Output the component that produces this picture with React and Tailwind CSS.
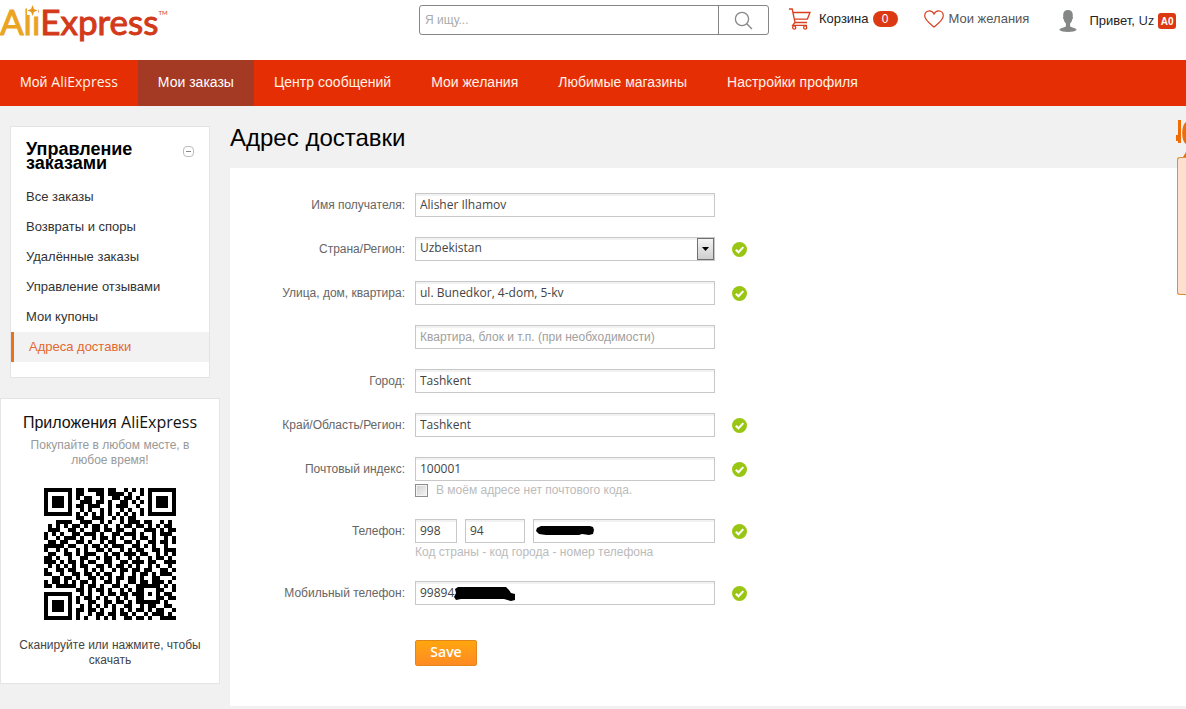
const NAV = ['Мои заказы', 'Центр сообщений', 'Мои желания', 'Любимые магазины', 'Настройки профиля'];

const MENU = ['Все заказы', 'Возвраты и споры', 'Удалённые заказы', 'Управление отзывами', 'Мои купоны', 'Адреса доставки'];

const QR_ROWS = [
  '#######.##.####.##..#.#.#.#######',
  '#.....#.##...##.####.#..#.#.....#',
  '#.###.#.#.##..#..##.##.#..#.###.#',
  '#.###.#..###.##.#..##.#.#.#.###.#',
  '#.###.#.##.###..#.###..#..#.###.#',
  '#.....#..#.#..#.#..#.#..#.#.....#',
  '#######.#.#.#.#.#.#.#.#.#.#######',
  '........##..###..#.#.##..........',
  '...####..###..#.#..#.###.##..#.#.',
  '.#.#.#.##.#.##.#..#.##.##.#.#.##.',
  '.###..##.#..##.##.##..#..###.#.##',
  '#.#.#..##.###.#..##.###.#..#.###.',
  '#..#.###.#..#.##.#.#..#.##.#..#.#',
  '.##.##..##.#..#.##..##.#..##.##.#',
  '#####.##..#.##.#.###..##.#.#..#..',
  '#..#.#..#.#..##.#..#.#.##..##.###',
  '.##..##.#.###..#.##.###.##..#.#.#',
  '##.#..#..##..#.##.#..#.#..#.##.#.',
  '###.#.##.#.##..##..##.###.##..###',
  '.#.#.#.#.##..##.#.##.#.#..#.#..#.',
  '#..##.##..#.#.#..#.##.##.##..##.#',
  '##..#..##.##.#.##..#..#.##.#.###.',
  '..##.##.#..##.#.#.##.##.#..##...#',
  '#.##.#.#.##.#..##.#..##.##.###.#.',
  '##.#####.#.##.#..##.#..######.#.#',
  '........##.#.##.#..#.#.##...##..#',
  '#######..#.#..#.##.##.###.#.#.##.',
  '#.....#.#.##.#.#..#.#..##...##.##',
  '#.###.#.#..##..##.##.#.######.#..',
  '#.###.#..#.#.#.#.#..##..#.##..##.',
  '#.###.#.##.##.#..#.#.#.##.#.##..#',
  '#.....#.#..#.##.##.##.#..#.###.#.',
  '#######.#.#..#.#.#..##.##.#..####',
];

function CheckIcon() {
  return (
    <svg className="size-[15px] shrink-0" viewBox="0 0 15 15" aria-hidden="true">
      <circle cx="7.5" cy="7.5" r="7.5" fill="#99c613" />
      <path d="M3.8 7.700 6.500 10.300 11.300 5.100" fill="none" stroke="#fff" strokeWidth="2.1" />
    </svg>
  );
}

function QrCode() {
  return (
    <svg className="mx-auto size-[132px]" viewBox="0 0 33 33" shapeRendering="crispEdges" role="img" aria-label="QR">
      {QR_ROWS.map((row, y) =>
        [...row].map((cell, x) => cell === '#' && <rect key={`${x}-${y}`} x={x} y={y} width="1" height="1" />)
      )}
    </svg>
  );
}

const inputClass =
  "block h-6 w-full min-w-0 border border-[#c8c8c8] bg-white px-1 pb-0.5 font-['Open_Sans',sans-serif] text-[12px] text-[#444] shadow-[inset_0_2px_1px_#f1f1f1] outline-none placeholder:font-['Liberation_Sans',sans-serif] placeholder:text-[#a0a0a0]";

function Field({ id, label, ok, hint, children }) {
  return (
    <div className="mb-5 grid grid-cols-[175px_300px_22px] gap-x-[10px]">
      <label htmlFor={id} className="text-right text-[12px] leading-6 text-[#666]">
        {label}
      </label>
      <div>
        {children}
        {hint}
      </div>
      <div className="flex h-6 items-center pl-[7px]">{ok && <CheckIcon />}</div>
    </div>
  );
}

function Header() {
  return (
    <header className="flex h-[60px] items-start bg-white">
      <a href="#" aria-label="AliExpress" className="relative flex w-[419px] shrink-0 items-start font-['Lato',sans-serif] text-[35px] leading-[42px] text-[#d23a1a] [-webkit-text-stroke:1px]">
        <span className="text-[#eba422]">Ali</span>Express
        <span className="pt-2 text-[6px] leading-[10px] [-webkit-text-stroke:0]">TM</span>
        <svg className="absolute left-[27px] top-[4px] h-[13px] w-[11px]" viewBox="0 0 11 13" aria-hidden="true">
          <path d="M0 0h11v11H0z" fill="#fff" />
          <path d="M5.500 1 6.900 5.100 10.500 6.500 6.900 7.900 5.500 12 4.100 7.900.5 6.500 4.100 5.100z" fill="#e8951c" />
        </svg>
      </a>
      <form className="mt-[5px] flex h-[30px] w-[350px] shrink-0 rounded-[3px] border border-[#858585]">
        <input aria-label="Поиск" placeholder="Я ищу..." className="min-w-0 flex-1 px-[5px] text-[12px] outline-none placeholder:text-[#aaa]" />
        <button type="button" aria-label="Найти" className="flex w-[50px] items-center justify-center border-l border-[#858585]">
          <svg className="size-[19px]" viewBox="0 0 19 19" fill="none" stroke="#888" strokeWidth="1.3">
            <circle cx="8" cy="8" r="6.6" />
            <path d="m12.700 12.700 5.300 5.300" />
          </svg>
        </button>
      </form>
      <div className="ml-5 flex h-[38px] items-center whitespace-nowrap text-[13px] text-[#222]">
        <a href="#" className="flex items-center">
          <svg className="mr-2 h-[22px] w-[22px]" viewBox="0 0 22 22" fill="none" stroke="#d8401f" strokeWidth="1.3">
            <path d="M0 1h3.200L6 14.500h12M3.800 4.500H21l-2.600 6.600H5.200M6 14.500l-2.300 2.800H18" />
            <circle cx="5.2" cy="19.5" r="1.6" />
            <circle cx="16.2" cy="19.5" r="1.6" />
          </svg>
          Корзина
          <span className="ml-1 flex h-4 w-[25px] items-center justify-center rounded-full bg-[#dc3912] text-[12px] text-white">0</span>
        </a>
        <a href="#" className="ml-[26px] flex items-center text-[#555]">
          <svg className="mr-[5px] h-[18px] w-5" viewBox="0 0 20 18" fill="none" stroke="#d8401f" strokeWidth="1.2">
            <path d="M10 17C6.500 14 .7 10.200.7 5.800.7 2.800 2.800.8 5.400.8 7.600.8 9.200 2.200 10 4c.8-1.800 2.400-3.200 4.600-3.200 2.600 0 4.700 2 4.700 5C19.300 10.200 13.500 14 10 17z" />
          </svg>
          Мои желания
        </a>
        <a href="#" className="ml-[30px] flex items-center pt-1">
          <svg className="mr-3 h-[22px] w-[18px]" viewBox="0 0 18 22" fill="#858786">
            <path d="M9 0c3 0 4.800 1.800 4.800 4.800 0 .8 0 1.400-.2 1.900.7.200.5 1.700-.3 2.500-.3 2-1.300 3.400-2.200 4.200v2.800c1 1.200 5.800 1.600 6.600 3.600C16.500 21.500 13 22 9 22S1.500 21.500.3 19.800c.8-2 5.600-2.400 6.600-3.600v-2.800C6 12.600 5 11.200 4.700 9.200 3.900 8.400 3.700 6.900 4.400 6.700c-.2-.5-.2-1.100-.2-1.900C4.200 1.800 6 0 9 0z" />
          </svg>
          <span className="leading-[18px]">
            Привет, <span className="font-['Open_Sans',sans-serif] leading-none">Uz</span>
          </span>
          <span className="ml-1 flex h-4 w-[18px] items-center justify-center rounded-[3px] bg-[#dc3912] text-[10px] font-bold text-white">A0</span>
        </a>
      </div>
    </header>
  );
}

function Sidebar() {
  return (
    <aside className="w-[220px] shrink-0">
      <nav className="mx-[10px] mt-5 border border-[#e4e4e6] bg-white pb-[15px]">
        <div className="flex items-start justify-between px-[15px] pb-3 pt-[15px]">
          <h2 className="text-[18px] font-bold leading-[14px] text-black">
            Управление
            <br />
            заказами
          </h2>
          <button type="button" aria-label="Свернуть" className="mt-1 flex size-[11px] items-center justify-center rounded-[4px] border border-[#bbb]">
            <span className="h-px w-[5px] bg-[#888]" />
          </button>
        </div>
        <ul>
          {MENU.map((item, i) => (
            <li key={item}>
              <a
                href="#"
                className={
                  i === MENU.length - 1
                    ? 'block border-l-3 border-[#e6741a] bg-[#f2f2f3] pl-[15px] text-[13px] leading-[30px] text-[#e2682f]'
                    : 'block pl-[15px] text-[13px] leading-[30px] text-[#333]'
                }
              >
                {item}
              </a>
            </li>
          ))}
        </ul>
      </nav>
      <section className="mt-5 border border-[#e4e4e6] bg-white px-3 pb-[15px] pt-[13px] text-center">
        <h3 className="text-[16px] leading-[22px] text-[#111]">
          Приложения <span className="font-['Open_Sans',sans-serif] leading-none">AliExpress</span>
        </h3>
        <p className="mb-5 mt-1 px-2 text-[12px] leading-[15px] text-[#999]">Покупайте в любом месте, в любое время!</p>
        <QrCode />
        <p className="mt-[18px] text-[12px] leading-[15px] text-[#444]">Сканируйте или нажмите, чтобы скачать</p>
      </section>
    </aside>
  );
}

function AddressForm() {
  return (
    <form className="bg-white pb-10 pt-[25px]">
      <Field id="name" label="Имя получателя:">
        <input id="name" className={inputClass} defaultValue="Alisher Ilhamov" />
      </Field>
      <Field id="country" label="Страна/Регион:" ok>
        <div className="relative">
          <select id="country" className={`${inputClass} appearance-none`}>
            <option>Uzbekistan</option>
          </select>
          <span className="pointer-events-none absolute right-px top-px flex h-[22px] w-[17px] items-center justify-center border border-[#707070] bg-linear-to-b from-[#f4f4f4] to-[#cfcfcf]">
            <svg className="h-1 w-[7px]" viewBox="0 0 7 4">
              <path d="M0 0h7L3.500 4z" />
            </svg>
          </span>
        </div>
      </Field>
      <Field id="street" label="Улица, дом, квартира:" ok>
        <input id="street" className={inputClass} defaultValue="ul. Bunedkor, 4-dom, 5-kv" />
      </Field>
      <Field id="flat" label="">
        <input id="flat" aria-label="Квартира, блок" className={inputClass} placeholder="Квартира, блок и т.п. (при необходимости)" />
      </Field>
      <Field id="city" label="Город:">
        <input id="city" className={inputClass} defaultValue="Tashkent" />
      </Field>
      <Field id="region" label="Край/Область/Регион:" ok>
        <input id="region" className={inputClass} defaultValue="Tashkent" />
      </Field>
      <Field
        id="zip"
        label="Почтовый индекс:"
        ok
        hint={
          <label className="flex h-[18px] items-center text-[12px] text-[#bbb]">
            <input type="checkbox" className="mr-2 size-[13px] appearance-none border border-[#8e8e8e] bg-linear-to-br from-[#cfcfcf] to-[#f6f6f6] shadow-[inset_0_0_0_1px_#f4f4f4]" />
            В моём адресе нет почтового кода.
          </label>
        }
      >
        <input id="zip" className={inputClass} defaultValue="100001" />
      </Field>
      <Field id="phone" label="Телефон:" ok hint={<p className="text-[12px] leading-[18px] text-[#bbb]">Код страны - код города - номер телефона</p>}>
        <div className="grid grid-cols-[42px_60px_1fr] gap-x-2">
          <input id="phone" className={inputClass} defaultValue="998" />
          <input aria-label="Код города" className={inputClass} defaultValue="94" />
          <div className="relative">
            <input aria-label="Номер телефона" className={inputClass} />
            <svg className="pointer-events-none absolute left-[3px] top-1.5 h-3 w-[60px]" viewBox="0 0 60 12">
              <path d="M5 1h49l3 1 1 3-1 4-4 1-7-1-3 1H10L3 9 0 6l1-3z" />
            </svg>
          </div>
        </div>
      </Field>
      <Field id="mobile" label="Мобильный телефон:" ok>
        <div className="relative">
          <input id="mobile" className={inputClass} defaultValue="99894" />
          <svg className="pointer-events-none absolute left-[39px] top-[5px] h-[15px] w-[62px]" viewBox="0 0 62 15">
            <path d="M4 1h48l3 3 2 3 4 1v6l-4 1-7-2H7l-5 1-2-3 2-4-1-4z" />
          </svg>
        </div>
      </Field>
      <button
        type="button"
        className="ml-[185px] mt-[35px] block h-[26px] w-[62px] rounded-[2px] border border-[#e2861c] bg-linear-to-b from-[#ffa60c] to-[#ff8a22] pb-0.5 font-['Open_Sans',sans-serif] text-[14px] font-semibold leading-[22px] text-white"
      >
        Save
      </button>
    </form>
  );
}

export default function App() {
  return (
    <div className="min-h-screen bg-[#f1f1f2] font-['Liberation_Sans',Arial,sans-serif]">
      <Header />
      <nav className="flex h-[46px] bg-[#e62e04] text-[14px] leading-[45px] text-[#fff3e6]">
        <a href="#" className="px-5">
          Мой <span className="font-['Open_Sans',sans-serif] leading-none">AliExpress</span>
        </a>
        {NAV.map((item, i) => (
          <a key={item} href="#" className={i === 0 ? 'bg-[#a43a24] px-5 text-white' : 'px-5'}>
            {item}
          </a>
        ))}
      </nav>
      <div className="relative flex gap-[10px] overflow-hidden pb-[3px]">
        <Sidebar />
        <main className="min-w-0 flex-1">
          <h1 className="h-[62px] pt-[17px] text-[24px] leading-[30px] text-black">Адрес доставки</h1>
          <AddressForm />
        </main>
        <div className="absolute right-0 top-[14px] w-[9px]">
          <svg className="-ml-px block h-[37px] w-[10px]" viewBox="0 0 10 37" fill="#ee6d05">
            <path d="M2 0h3v23H2v-2H0v-6h2zM10 2v22c-5-3-5-19 0-22zM7 37l3-5v5z" />
          </svg>
          <div className="h-[138px] rounded-l-[3px] border border-r-0 border-[#dd8f3d] bg-[#ffdfcd]" />
        </div>
      </div>
    </div>
  );
}
